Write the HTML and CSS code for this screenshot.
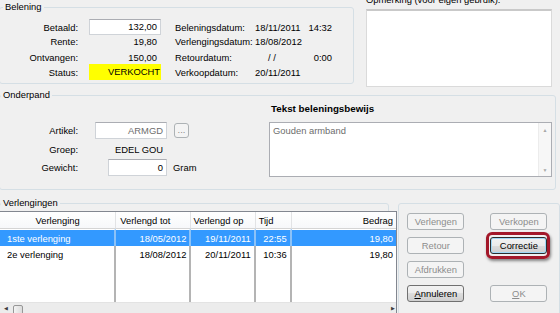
FILE: index.html
```html
<!DOCTYPE html>
<html lang="nl">
<head>
    <meta charset="UTF-8">
    <meta name="viewport" content="width=device-width, initial-scale=1.0">
    <title>Belening</title>
    <link rel="stylesheet" href="styles.css">
</head>
<body>
<div class="screen">
    <div class="top">
        <fieldset class="group belening">
            <legend>Belening</legend>
            <div class="bel-grid upper">
                <span class="lbl">Betaald:</span>
                <span class="field num">132,00</span>
                <span class="lbl2">Beleningsdatum:</span>
                <span class="date">18/11/2011</span>
                <span class="time">14:32</span>

                <span class="lbl">Rente:</span>
                <span class="value num">19,80</span>
                <span class="lbl2">Verlengingsdatum:</span>
                <span class="date">18/08/2012</span>
                <span class="time"></span>
            </div>
            <div class="bel-grid lower">
                <span class="lbl">Ontvangen:</span>
                <span class="value num">150,00</span>
                <span class="lbl2">Retourdatum:</span>
                <span class="date empty">/ /</span>
                <span class="time">0:00</span>

                <span class="lbl">Status:</span>
                <span class="status">VERKOCHT</span>
                <span class="lbl2">Verkoopdatum:</span>
                <span class="date">20/11/2011</span>
                <span class="time"></span>
            </div>
        </fieldset>
        <div class="opmerking">
            <div class="opm-label">Opmerking (voor eigen gebruik).</div>
            <div class="memo"></div>
        </div>
    </div>

    <fieldset class="group onderpand">
        <legend>Onderpand</legend>
        <div class="onder-cols">
            <div class="onder-left">
                <div class="frow artikel">
                    <span class="lbl">Artikel:</span>
                    <span class="field code">ARMGD</span>
                    <span class="dots">...</span>
                </div>
                <div class="frow groep">
                    <span class="lbl">Groep:</span>
                    <span class="groep-val">EDEL GOU</span>
                </div>
                <div class="frow gewicht">
                    <span class="lbl">Gewicht:</span>
                    <span class="field weight">0</span>
                    <span class="unit">Gram</span>
                </div>
            </div>
            <div class="onder-right">
                <div class="heading">Tekst beleningsbewijs</div>
                <div class="memo text-memo">
                    <span class="memo-text">Gouden armband</span>
                    <span class="vscroll">
                        <span class="arrow">&#9650;</span>
                        <span class="arrow">&#9660;</span>
                    </span>
                </div>
            </div>
        </div>
    </fieldset>

    <div class="bottom">
        <fieldset class="group verlengingen">
            <legend>Verlengingen</legend>
            <div class="listview">
                <table class="grid">
                    <colgroup>
                        <col style="width:116px">
                        <col style="width:75px">
                        <col style="width:64px">
                        <col style="width:36px">
                        <col style="width:104px">
                    </colgroup>
                    <thead>
                        <tr>
                            <th class="c-name">Verlenging</th>
                            <th class="c-tot">Verlengd tot</th>
                            <th class="c-op">Verlengd op</th>
                            <th class="c-tijd">Tijd</th>
                            <th class="c-bedrag">Bedrag</th>
                        </tr>
                    </thead>
                    <tbody>
                        <tr class="selected first">
                            <td>1ste verlenging</td>
                            <td class="r">18/05/2012</td>
                            <td class="r">19/11/2011</td>
                            <td class="r">22:55</td>
                            <td class="r">19,80</td>
                        </tr>
                        <tr>
                            <td>2e verlenging</td>
                            <td class="r">18/08/2012</td>
                            <td class="r">20/11/2011</td>
                            <td class="r">10:36</td>
                            <td class="r">19,80</td>
                        </tr>
                        <tr class="filler">
                            <td></td><td></td><td></td><td></td><td></td>
                        </tr>
                    </tbody>
                </table>
                <div class="hscroll">
                    <span class="harrow">&#9664;</span>
                    <span class="thumb"></span>
                    <span class="harrow right">&#9654;</span>
                </div>
            </div>
        </fieldset>

        <fieldset class="group actions">
            <div class="buttons">
                <button class="btn" disabled>Verlengen</button>
                <button class="btn" disabled>Verkopen</button>
                <button class="btn" disabled>Retour</button>
                <span class="hl"><button class="btn focused">Correctie</button></span>
                <button class="btn" disabled>Afdrukken</button>
                <span></span>
                <button class="btn"><u>A</u>nnuleren</button>
                <button class="btn" disabled><u>O</u>K</button>
            </div>
        </fieldset>
    </div>
</div>
</body>
</html>
```

FILE: styles.css
```css
* {
    box-sizing: border-box;
}

body {
    margin: 0;
    background-color: #f0f0f0;
    font-family: "Liberation Sans", Arial, sans-serif;
    font-size: 9.4px;
    color: #000;
    overflow: hidden;
}

.screen {
    width: 560px;
    height: 313px;
    overflow: hidden;
    padding-top: 1px;
}

/* group boxes */
.group {
    margin: 0;
    padding: 0;
    border: 1px solid #d5dfe5;
    border-radius: 3px;
    min-width: 0;
}

.group legend {
    padding: 0 2px;
    margin-left: 1px;
    line-height: 12px;
}

.top {
    display: flex;
    align-items: flex-start;
    height: 88px;
}

.belening {
    width: 355px;
    height: 83px;
    margin-left: -1px;
}

.belening legend {
    margin-left: 3px;
}

.bel-grid {
    display: grid;
    grid-template-columns: 78px 11px 72px 14px 80px 53px 24px;
    align-items: center;
}

.bel-grid.upper {
    margin-top: 6px;
    grid-template-rows: 16px 13px;
}

.bel-grid.lower {
    margin-top: 2px;
    grid-template-rows: 14px 16px;
}

.bel-grid .lbl {
    grid-column: 1;
    text-align: right;
}

.bel-grid .field,
.bel-grid .value,
.bel-grid .status {
    grid-column: 3;
}

.bel-grid .lbl2 {
    grid-column: 5;
}

.bel-grid .date {
    grid-column: 6;
}

.bel-grid .time {
    grid-column: 7;
    text-align: right;
}

.date.empty {
    padding-left: 13px;
}

.field {
    display: block;
    height: 16px;
    line-height: 14px;
    background-color: #fff;
    border: 1px solid #cfd3d8;
    border-top-color: #abadb3;
    text-align: right;
    padding-right: 3px;
}

.value {
    text-align: right;
    padding-right: 4px;
}

.status {
    height: 16px;
    line-height: 16px;
    background-color: #ffff00;
    text-align: right;
    padding-right: 1px;
}

.opmerking {
    margin-left: 12px;
    margin-top: -7px;
    width: 186px;
}

.opm-label {
    line-height: 12px;
}

.memo {
    margin-top: 3px;
    height: 78px;
    background-color: #fff;
    border: 1px solid #dadada;
    border-top: 2px solid #c9c9c9;
}

/* onderpand */
.onderpand {
    width: 557px;
    height: 101px;
    margin-left: -1px;
}

.onder-cols {
    display: grid;
    grid-template-columns: 269px 283px;
}

.onder-left {
    padding-top: 21px;
}

.frow {
    display: flex;
    align-items: center;
}

.frow .lbl {
    width: 78px;
    text-align: right;
}

.frow.artikel {
    height: 17px;
}

.frow.groep {
    height: 14px;
    margin-top: 3px;
}

.frow.gewicht {
    height: 17px;
    margin-top: 3px;
}

.field.code {
    width: 72px;
    height: 17px;
    line-height: 15px;
    margin-left: 17px;
    color: #6d6d6d;
}

.dots {
    width: 15px;
    height: 15px;
    margin-left: 7px;
    border: 1px solid #adb2b5;
    border-radius: 3px;
    background-color: #f4f4f4;
    color: #8a8a8a;
    text-align: center;
    line-height: 11px;
}

.groep-val {
    width: 68px;
    margin-left: 17px;
    text-align: right;
}

.field.weight {
    width: 59px;
    height: 17px;
    line-height: 15px;
    margin-left: 30px;
}

.unit {
    margin-left: 6px;
}

.heading {
    margin-top: 2px;
    padding-left: 2px;
    line-height: 12px;
    font-weight: bold;
    font-size: 9.8px;
}

.text-memo {
    display: flex;
    justify-content: space-between;
    margin-top: 7px;
    height: 55px;
    border: 1px solid #abadb3;
    border-top-color: #abadb3;
    color: #6d6d6d;
}

.memo-text {
    padding: 2px 0 0 3px;
}

.vscroll {
    display: flex;
    flex-direction: column;
    justify-content: space-between;
    width: 13px;
    background-color: #f7f7f7;
    border-left: 1px solid #ececec;
    padding: 4px 0 3px;
}

.vscroll .arrow {
    font-size: 5px;
    color: #a8a8a8;
    text-align: center;
    line-height: 6px;
}

/* verlengingen */
.bottom {
    display: flex;
    align-items: flex-start;
    margin-top: 7px;
}

.verlengingen {
    width: 399px;
    height: 130px;
    margin-left: -1px;
}

.listview {
    margin-top: 2px;
    margin-left: -1px;
    width: 398px;
    border: 1px solid #828790;
    background-color: #fff;
}

.grid {
    width: 396px;
    table-layout: fixed;
    border-collapse: separate;
    border-spacing: 0;
}

.grid th {
    height: 17px;
    padding: 0 3px;
    font-weight: normal;
    text-align: left;
    white-space: nowrap;
    background: linear-gradient(#ffffff, #f7f8fa);
    border-bottom: 1px solid #d5d5d5;
    border-right: 1px solid #e2e3e5;
}

.grid th.c-name {
    text-align: center;
}

.grid th.c-tot {
    padding-left: 4px;
}

.grid th.c-op {
    padding-left: 2px;
}

.grid th.c-bedrag {
    text-align: right;
    border-right: none;
}

.grid td {
    height: 16px;
    padding: 0 3px 0 7px;
    white-space: nowrap;
    border-right: 2px solid #b4b4b4;
}

.grid td:last-child {
    border-right: none;
}

.grid td.r {
    text-align: right;
    padding: 0 3px 0 0;
}

.grid tr.first td {
    height: 17px;
    border-top: 1px solid #fff;
}

.grid tr.selected td {
    background-color: #3399ff;
    color: #fff;
}

.grid tr.selected td:not(:last-child) {
    border-right-color: #8cc2f7;
}

.grid tr.filler td {
    height: 40px;
}

.hscroll {
    display: flex;
    align-items: center;
    height: 17px;
    background-color: #ececec;
    border-top: 1px solid #e3e3e3;
    padding: 0 0 6px 4px;
}

.harrow {
    font-size: 5px;
    color: #3c3c3c;
}

.harrow.right {
    margin-left: auto;
    margin-right: 1px;
}

.thumb {
    width: 10px;
    height: 11px;
    margin-left: 5px;
    margin-top: 5px;
    border: 1px solid #979797;
    border-radius: 2px;
    background: linear-gradient(to right, #f3f3f3, #dcdcdc);
}

/* knoppen */
.actions {
    width: 165px;
    height: 120px;
    margin-left: 9px;
    margin-top: 6px;
    padding: 9px 0 0 8px;
}

.buttons {
    display: grid;
    grid-template-columns: 57px 57px;
    grid-auto-rows: 17px;
    column-gap: 26px;
    row-gap: 7px;
}

.btn {
    width: 57px;
    height: 17px;
    padding: 0;
    font-family: inherit;
    font-size: 9.4px;
    color: #000;
    border: 1px solid #707070;
    border-radius: 3px;
    background: linear-gradient(#f2f2f2, #ebebeb 50%, #dddddd 50%, #cfcfcf);
}

.btn:disabled {
    color: #8d8d8d;
    border-color: #adb2b5;
    background: #f4f4f4;
}

.btn.focused {
    border-color: #2d2d2d;
    box-shadow: inset 0 0 0 1px #9fd8f7;
}

.hl {
    position: relative;
    display: block;
}

.hl::after {
    content: "";
    position: absolute;
    left: -4px;
    right: -3px;
    top: -5px;
    bottom: -5px;
    border: 3px solid #a3182a;
    border-radius: 6px;
    box-shadow: 1px 2px 3px rgba(0, 0, 0, 0.45);
}
```
